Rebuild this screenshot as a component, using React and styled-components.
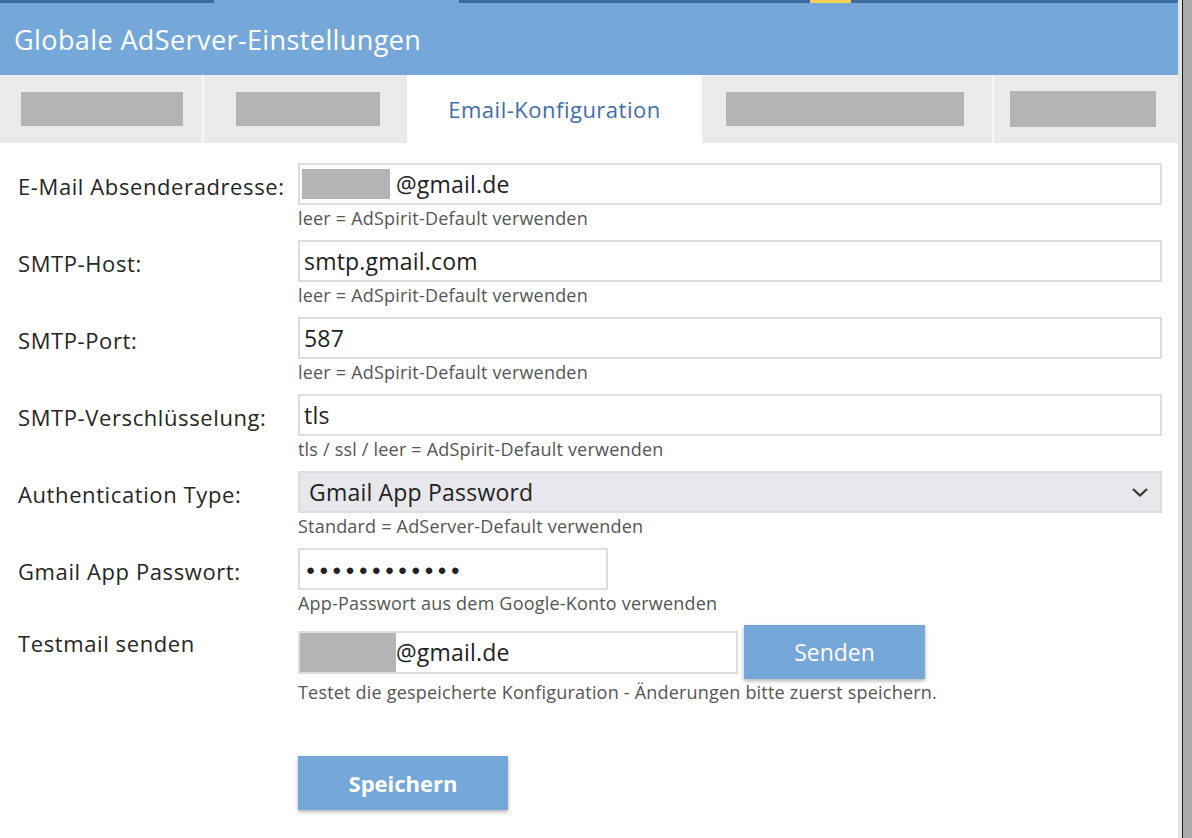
import React from "react";
import styled, { createGlobalStyle } from "styled-components";

const GlobalStyle = createGlobalStyle`
  html, body {
    margin: 0;
    padding: 0;
    background: #ffffff;
  }
  body {
    font-family: "Open Sans", "Noto Sans", "Liberation Sans", sans-serif;
    color: #222;
  }
`;

const Page = styled.div`
  display: flex;
  width: 1192px;
  min-height: 838px;
`;

const Panel = styled.div`
  width: 1178px;
  display: flex;
  flex-direction: column;
  background: #fff;
`;

const Gutter = styled.div`
  flex: 1;
  display: flex;
  border-left: 4px solid #e4e4e4;
  background: #ababab;

  &::before {
    content: "";
    width: 1px;
    background: #1c1c1c;
  }
`;

const TopStrip = styled.div`
  display: flex;
  height: 3px;
`;

const StripPart = styled.div`
  width: ${(p) => p.$w}px;
  flex: ${(p) => (p.$w ? "none" : 1)};
  background: ${(p) => p.$color};
`;

const Header = styled.div`
  height: 72px;
  display: flex;
  align-items: center;
  padding-left: 14px;
  background: #75a8d8;
  color: #fff;
  font-size: 27px;
  letter-spacing: 0.4px;
`;

const TabBar = styled.div`
  display: flex;
  height: 68px;
  background: #ebebeb;
`;

const Tab = styled.div`
  width: ${(p) => p.$w}px;
  flex: ${(p) => (p.$w ? "none" : 1)};
  display: flex;
  align-items: center;
  justify-content: center;
  background: ${(p) => (p.$active ? "#fff" : "#ebebeb")};
  border-left: ${(p) => (p.$sep ? "2px solid #f6f6f6" : "none")};
  color: #3f6ea8;
  font-size: 22px;
  letter-spacing: 0.5px;
`;

const TabMask = styled.div`
  width: ${(p) => p.$w}px;
  height: ${(p) => p.$h || 34}px;
  margin-left: ${(p) => p.$shift || 0}px;
  background: #b3b4b5;
`;

const Form = styled.div`
  padding: 20px 16px 40px 18px;
  display: flex;
  flex-direction: column;
`;

const Row = styled.div`
  display: grid;
  grid-template-columns: 280px 1fr;
  margin-bottom: ${(p) => p.$gap ?? 11}px;
`;

const Label = styled.div`
  font-size: 22px;
  letter-spacing: 0.6px;
  line-height: ${(p) => p.$lh || 42}px;
  padding-top: ${(p) => p.$top ?? 2}px;
  color: #262626;
`;

const FieldCol = styled.div`
  display: flex;
  flex-direction: column;
`;

const FieldLine = styled.div`
  display: flex;
  align-items: center;
  gap: 6px;
`;

const TextBox = styled.div`
  box-sizing: border-box;
  width: ${(p) => (p.$w ? `${p.$w}px` : "100%")};
  height: ${(p) => p.$h || 42}px;
  display: flex;
  align-items: center;
  padding: 0 ${(p) => (p.$flush ? 0 : 4)}px;
  border: 2px solid #dddddd;
  background: ${(p) => (p.$select ? "#e8e8ec" : "#fff")};
  font-size: 23px;
  letter-spacing: 0.2px;
  color: #222;
`;

const Mask = styled.span`
  display: inline-block;
  flex: none;
  width: ${(p) => p.$w}px;
  height: ${(p) => p.$h}px;
  margin-left: ${(p) => p.$ml || 0}px;
  margin-right: ${(p) => p.$mr || 0}px;
  background: #b3b4b5;
`;

const SelectText = styled.span`
  flex: 1;
  padding-left: 5px;
`;

const Dots = styled.span`
  font-size: 15px;
  letter-spacing: 4.1px;
  padding-left: 2px;
  color: #222;
`;

const Hint = styled.div`
  margin-top: 2px;
  font-size: 18px;
  letter-spacing: 0.2px;
  line-height: 22px;
  color: #555;
`;

const Button = styled.button`
  width: ${(p) => p.$w}px;
  height: 54px;
  padding: 0;
  border: none;
  background: #75a8d8;
  color: #fff;
  font-family: inherit;
  font-size: ${(p) => (p.$bold ? 22 : 23)}px;
  font-weight: ${(p) => (p.$bold ? 700 : 400)};
  box-shadow: 0 2px 4px rgba(0, 0, 0, 0.3);
  cursor: pointer;
`;

const Actions = styled.div`
  padding-left: 280px;
`;

const Chevron = () => (
  <svg width="18" height="12" viewBox="0 0 18 12" style={{ marginRight: 7 }}>
    <path d="M2 3l7 6.5L16 3" fill="none" stroke="#333" strokeWidth="2.2" />
  </svg>
);

const strip = [
  { w: 214, color: "#3e6a9f" },
  { w: 245, color: "#75a8d8" },
  { w: 351, color: "#3e6a9f" },
  { w: 41, color: "#f5cf5a" },
  { w: 0, color: "#3e6a9f" },
];

const fields = [
  { label: "E-Mail Absenderadresse:", mask: 88, value: "@gmail.de", hint: "leer = AdSpirit-Default verwenden" },
  { label: "SMTP-Host:", value: "smtp.gmail.com", hint: "leer = AdSpirit-Default verwenden" },
  { label: "SMTP-Port:", value: "587", hint: "leer = AdSpirit-Default verwenden" },
  { label: "SMTP-Verschlüsselung:", value: "tls", hint: "tls / ssl / leer = AdSpirit-Default verwenden" },
];

export default function App() {
  return (
    <>
      <GlobalStyle />
      <Page>
        <Panel>
          <TopStrip>
            {strip.map((s, i) => (
              <StripPart key={i} $w={s.w} $color={s.color} />
            ))}
          </TopStrip>
          <Header>Globale AdServer-Einstellungen</Header>
          <TabBar>
            <Tab $w={202}>
              <TabMask $w={162} $shift={2} />
            </Tab>
            <Tab $w={203} $sep>
              <TabMask $w={144} $shift={4} />
            </Tab>
            <Tab $w={295} $active>
              Email-Konfiguration
            </Tab>
            <Tab $w={290}>
              <TabMask $w={238} $shift={-4} />
            </Tab>
            <Tab $sep>
              <TabMask $w={146} $h={36} $shift={-6} />
            </Tab>
          </TabBar>

          <Form>
            {fields.map((f) => (
              <Row key={f.label}>
                <Label>{f.label}</Label>
                <FieldCol>
                  <TextBox>
                    {f.mask && <Mask $w={f.mask} $h={30} $ml={-2} $mr={6} />}
                    {f.value}
                  </TextBox>
                  <Hint>{f.hint}</Hint>
                </FieldCol>
              </Row>
            ))}

            <Row>
              <Label>Authentication Type:</Label>
              <FieldCol>
                <TextBox $select>
                  <SelectText>Gmail App Password</SelectText>
                  <Chevron />
                </TextBox>
                <Hint>Standard = AdServer-Default verwenden</Hint>
              </FieldCol>
            </Row>

            <Row>
              <Label>Gmail App Passwort:</Label>
              <FieldCol>
                <TextBox $w={310}>
                  <Dots>●●●●●●●●●●●●</Dots>
                </TextBox>
                <Hint>App-Passwort aus dem Google-Konto verwenden</Hint>
              </FieldCol>
            </Row>

            <Row $gap={53}>
              <Label $top={0} $lh={36}>
                Testmail senden
              </Label>
              <FieldCol>
                <FieldLine>
                  <TextBox $w={440} $h={43} $flush>
                    <Mask $w={96} $h={39} />
                    @gmail.de
                  </TextBox>
                  <Button $w={181}>Senden</Button>
                </FieldLine>
                <Hint>Testet die gespeicherte Konfiguration - Änderungen bitte zuerst speichern.</Hint>
              </FieldCol>
            </Row>

            <Actions>
              <Button $w={210} $bold>
                Speichern
              </Button>
            </Actions>
          </Form>
        </Panel>
        <Gutter />
      </Page>
    </>
  );
}
